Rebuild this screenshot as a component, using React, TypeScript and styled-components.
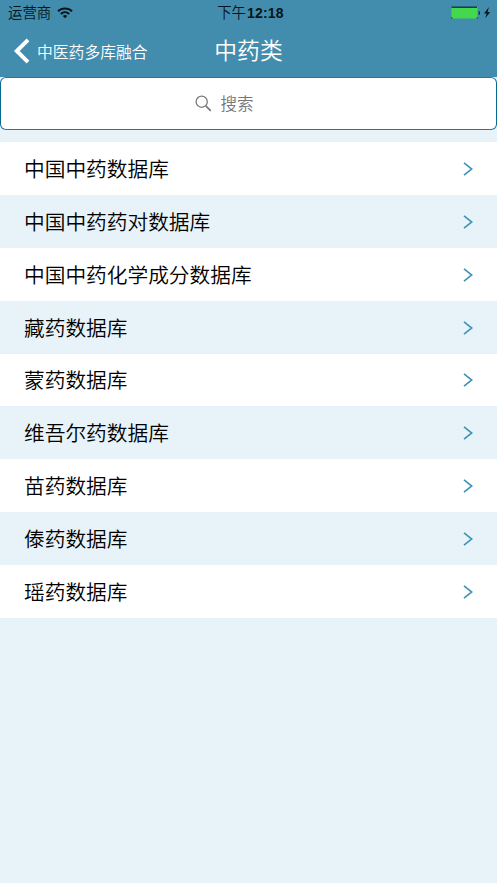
import React from "react";
import styled, { createGlobalStyle } from "styled-components";

const databases: string[] = [
    "中国中药数据库",
    "中国中药药对数据库",
    "中国中药化学成分数据库",
    "藏药数据库",
    "蒙药数据库",
    "维吾尔药数据库",
    "苗药数据库",
    "傣药数据库",
    "瑶药数据库",
];

const App = () => {
    return (
        <Container>
            <GlobalStyle />

            <Header>
                <StatusBar>
                    <Carrier>
                        <span>运营商</span>
                        <svg width="16" height="12" viewBox="0 0 16 12" fill="none" stroke="#06141b" strokeWidth="2">
                            <path d="M1 4.2C4.8 .5 11.2 .5 15 4.2" />
                            <path d="M3.8 7C6.2 4.7 9.8 4.7 12.2 7" />
                            <path d="M5.8 9Q8 7 10.2 9L8 11.2Z" fill="#06141b" stroke="none" />
                        </svg>
                    </Carrier>
                    <Time>下午<b>12:18</b></Time>
                    <Power>
                        <svg width="40" height="14" viewBox="0 0 40 14">
                            <rect x=".5" y="1" width="26" height="11.5" fill="#44d84e" />
                            <path d="M.5 1.2H26" stroke="#0c2b31" strokeWidth="1.3" />
                            <path d="M0 12h1.4M25.6 12H27" stroke="#0c2b31" strokeWidth="1.2" />
                            <path d="M28 5.2q1.3 1.7 0 3.6z" fill="#06141b" stroke="#06141b" strokeWidth=".5" />
                            <path d="M38 1L33 7.6h2.7L34.2 12.3L39.2 6H36.5Z" fill="#06141b" />
                        </svg>
                    </Power>
                </StatusBar>

                <NavBar>
                    <Back>
                        <svg width="17" height="26" viewBox="0 0 17 26" fill="none" stroke="#fff" strokeWidth="4">
                            <path d="M15 1.8L3.8 13L15 24.2" />
                        </svg>
                        <BackLabel>中医药多库融合</BackLabel>
                    </Back>
                    <Title>中药类</Title>
                </NavBar>
            </Header>

            <Search>
                <svg width="17" height="17" viewBox="0 0 17 17" fill="none" stroke="#77777b" strokeWidth="1.3">
                    <circle cx="6.7" cy="6.7" r="5.6" />
                    <path d="M10.8 10.8L15.8 15.8" strokeWidth="1.7" />
                </svg>
                <span>搜索</span>
            </Search>

            <List>
                {databases.map((name, i) => (
                    <Row key={name} $shaded={i % 2 === 1}>
                        <Name>{name}</Name>
                        <svg width="10" height="15" viewBox="0 0 10 15" fill="none" stroke="#3e92b5" strokeWidth="1.6">
                            <path d="M1 1.8L8.8 8L1 14.2" />
                        </svg>
                    </Row>
                ))}
            </List>
        </Container>
    );
};

export default App;

const GlobalStyle = createGlobalStyle`
body {
    margin: 0;
    background: #e7f3f8;
}
`;

const Container = styled.div`
height: 883px;
box-sizing: border-box;
overflow: hidden;
background-color: #e7f3f8;
font-family: "Liberation Sans", "Noto Sans CJK SC", sans-serif;
font-weight: 350;
`;

const Header = styled.div`
height: 77px;
background-color: #428dad;
`;

const StatusBar = styled.div`
height: 25px;
display: grid;
grid-template-columns: 1fr auto 1fr;
align-items: center;
padding: 0 6px 0 8px;
font-size: 14.4px;
line-height: 24px;
color: #06141b;
`;

const Carrier = styled.div`
display: flex;
align-items: center;
gap: 6px;

span {
    padding-top: 1px;
}
`;

const Time = styled.div`
padding-left: 2px;
white-space: nowrap;

b {
    font-weight: 700;
    font-size: 14px;
    margin-left: 1px;
    letter-spacing: 0.2px;
}
`;

const Power = styled.div`
display: flex;
justify-content: flex-end;
`;

const NavBar = styled.div`
height: 52px;
display: grid;
grid-template-columns: 1fr auto 1fr;
align-items: center;
`;

const Back = styled.div`
display: flex;
align-items: center;
gap: 7px;
padding-left: 13px;
font-size: 15.8px;
line-height: 24px;
color: white;
white-space: nowrap;
`;

const BackLabel = styled.span`
padding-top: 3px;
`;

const Title = styled.div`
font-size: 22.8px;
line-height: 32px;
color: white;
`;

// the side borders are darker than the top and bottom ones
const Search = styled.div`
height: 53px;
box-sizing: border-box;
display: flex;
justify-content: center;
align-items: center;
gap: 9px;
padding-right: 49px;
border: 1px solid;
border-color: #24799a #0b6a90;
border-radius: 6px;
background-color: white;
font-size: 16.5px;
line-height: 24px;
color: #77777b;
`;

const List = styled.div`
margin-top: 12px;
`;

const Row = styled.div<{ $shaded: boolean }>`
height: 52.89px;
display: flex;
justify-content: space-between;
align-items: center;
padding: 0 24px;
background-color: ${({ $shaded }) => ($shaded ? "#e7f3f8" : "white")};
`;

const Name = styled.div`
padding-top: 3px;
font-size: 20.7px;
line-height: 30px;
color: #000;
`;
